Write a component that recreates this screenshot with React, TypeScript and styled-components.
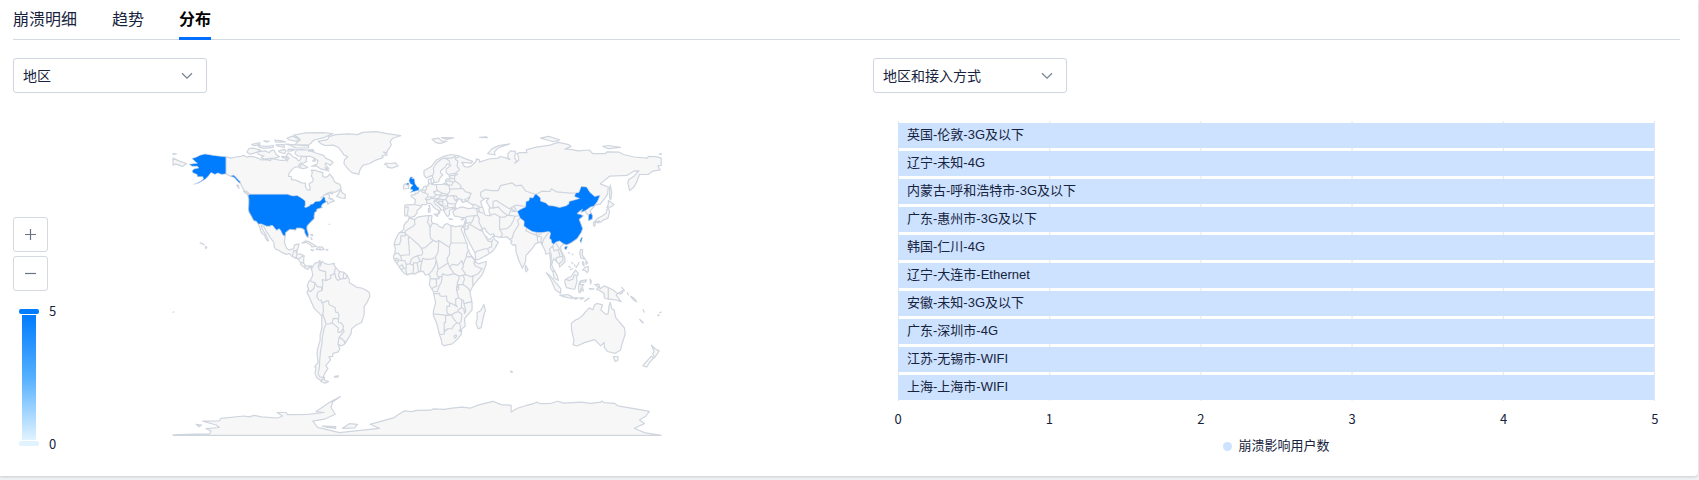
import React from "react";
import styled, { createGlobalStyle } from "styled-components";

const GlobalStyle = createGlobalStyle`
  *, *::before, *::after { box-sizing: border-box; }
  body {
    margin: 0;
    background: #f0f2f5;
    color: #17233d;
    font-family: "Liberation Sans", "Noto Sans CJK SC", sans-serif;
    font-size: 13px;
  }
  ul, ol { list-style: none; margin: 0; padding: 0; }
`;

const Page = styled.main`
  padding: 0 1px 4px 0;
`;

const Card = styled.section`
  background: #fff;
  border-radius: 0 0 4px 0;
  box-shadow: 0 1px 3px rgba(0, 0, 0, 0.16);
  padding: 0 18px 20px 13px;
`;

const Tabs = styled.div`
  display: flex;
  gap: 35px;
  height: 40px;
  border-bottom: 1px solid #d5d9e0;
`;

const Tab = styled.button<{ $active?: boolean }>`
  height: 40px;
  padding: 0 0 1px;
  border: 0;
  border-bottom: 3px solid ${(p) => (p.$active ? "#006eff" : "transparent")};
  background: none;
  color: ${(p) => (p.$active ? "#000" : "#17233d")};
  font: ${(p) => (p.$active ? 700 : 400)} 16px/32px "Noto Sans CJK SC", sans-serif;
  cursor: pointer;
`;

const Columns = styled.div`
  display: grid;
  grid-template-columns: minmax(0, 1fr) minmax(0, 1fr);
  gap: 53px;
  padding-top: 18px;
`;

const Picker = styled.div`
  position: relative;
  width: 194px;
`;

const Select = styled.select`
  display: block;
  width: 100%;
  height: 35px;
  padding: 0 32px 2px 9px;
  appearance: none;
  border: 1px solid #cfd5de;
  border-radius: 3px;
  background: #fff;
  color: #17233d;
  font: 14px/20px "Noto Sans CJK SC", sans-serif;
`;

const Chevron = styled.svg`
  position: absolute;
  top: 14px;
  right: 14px;
  pointer-events: none;
`;

const MapPanel = styled.div`
  display: grid;
  grid-template-columns: 1fr minmax(0, 488px) 1fr;
  padding-top: 38px;
`;

const WorldMap = styled.svg`
  display: block;
  width: 100%;
  overflow: visible;
`;

const Controls = styled.div`
  display: flex;
  flex-direction: column;
  gap: 4px;
  padding-top: 86px;
`;

const ZoomButton = styled.button`
  display: grid;
  place-items: center;
  width: 35px;
  height: 35px;
  padding: 0;
  border: 1px solid #d5d9e0;
  border-radius: 3px;
  background: #fff;
  cursor: pointer;
`;

const Range = styled.div`
  display: flex;
  gap: 10px;
  margin: 14px 0 0 6px;
`;

const RangeTrack = styled.div`
  display: flex;
  flex-direction: column;
  align-items: center;
  gap: 1px;
  width: 20px;
`;

const Handle = styled.span<{ $color: string }>`
  width: 20px;
  height: 5px;
  border-radius: 2px;
  background: ${(p) => p.$color};
`;

const Gradient = styled.span`
  width: 14px;
  height: 125px;
  background: linear-gradient(#007cff, #55b0ff 50%, #e0f3ff);
`;

const RangeLabels = styled.div`
  display: flex;
  flex-direction: column;
  justify-content: space-between;
  margin: -7px 0;
  font: 13px/18px "Noto Sans CJK SC", sans-serif;
`;

const BarPanel = styled.div`
  padding: 28px 25px 0 25px;
`;

const Plot = styled.ul`
  display: grid;
  gap: 3px;
  padding: 2px 0 1px;
  border-right: 1px solid #e0e6f1;
  background: linear-gradient(to right, #e0e6f1 1px, transparent 1px) 0 0 / 20% 100%;
`;

const Bar = styled.li`
  height: 25px;
  padding-left: 9px;
  background: #cce2ff;
  line-height: 24px;
  white-space: nowrap;
`;

const Axis = styled.ol`
  display: flex;
  justify-content: space-between;
  margin: 9px -6px 0;
  font: 13px/18px "Noto Sans CJK SC", sans-serif;
`;

const Tick = styled.li`
  width: 12px;
  text-align: center;
`;

const Legend = styled.div`
  display: flex;
  align-items: center;
  justify-content: center;
  gap: 6px;
  margin-top: 8px;
  line-height: 20px;
`;

const Dot = styled.span`
  width: 9px;
  height: 9px;
  border-radius: 50%;
  background: #cce2ff;
`;

/* Every shape is a list of "longitude,latitude" points. */
const project = (points: string) =>
  points
    .trim()
    .split(/\s+/)
    .map((pair) => {
      const [lon, lat] = pair.split(",").map(Number);
      return `${((lon + 180) * 1.356).toFixed(1)} ${((84 - lat) * 1.807).toFixed(1)}`;
    })
    .join("L");

const usEast =
  "-67,44.8 -70,43.5 -70.7,42 -70,41.7 -72,41.2 -74,40.7 -74,39.7 -75.5,39 -76,37 -76,35.5 -78,34 -79.5,33 -81.2,31.5 -81.3,29.7 -80.2,27 -80.4,25.2 -81.5,25.8 -82.8,27.8 -83,29.2 -84.3,30 -86,30.3 -89,30.3 -89.5,29.2 -91.5,29.5 -94,29.6 -97,27.8 -97.3,25.8";
const usWest =
  "-117,32.5 -118.5,34 -120.5,34.5 -122,36.8 -123.8,39 -124.3,40.5 -124,44 -124,46.3 -124.7,48.3";

const land = [
  // North and Central America
  `-141,69.7 -137,69 -134,69.6 -130,70 -128,70.5 -125,69.5 -124,70 -121,69.8 -117,68.9 -115,68 -110,68 -108,67.5 -108,68.7 -105,68.5 -101,67.8 -98,67.8 -96,68.2 -96,67.3 -94.5,69 -96.5,70.2 -95,71.9 -93,71 -91.5,69.6 -89,69 -87.5,67.5 -86,68 -85.5,69.8 -82,69.8 -81.3,68.7 -82,67.8 -81.5,67 -83.5,66.4 -86,66.2 -87,65.3 -88,64.2 -90,64 -92.5,62.5 -94.5,60.5 -94.7,58.9 -93,58.8 -92.4,57 -90,57 -87,56 -85,55.3 -82.3,55.1 -82.3,53 -81,51.5 -79,51.3 -79,53 -79.8,54.7 -77,56 -76.5,57.5 -78,59 -77.3,61 -78,62.3 -75,62.2 -72,61.5 -69.5,61 -69.5,59 -68,58.3 -66,58.7 -64.5,60.2 -62,58 -61,56 -59,55 -57,54.5 -56,52.7 -57,51.5 -60,50.2 -64,50.2 -67,49.3 -69,48.2 -71,47 -68,48.8 -65,49.2 -64.5,48 -65,46.7 -62,45.8 -61,45.3 -64,44.5 -66,43.5 -66,45 ${usEast} -97.8,22.5 -97,20.5 -96,19 -94.5,18.2 -92,18.6 -91,19 -90.4,21 -87,21.5 -87.7,19.5 -88.3,18 -88.8,16 -86,15.9 -83.3,15 -83.6,13 -83.7,11 -82.2,9.2 -80,9.2 -78,9.4 -77.3,8.6 -78,7.5 -78.5,8.8 -80,8.3 -80.5,7.4 -82.8,8.2 -83.6,8.8 -85.7,10 -86,11.2 -87.5,13 -90,13.7 -92.2,14.6 -94,16.1 -96.5,15.7 -99.7,16.8 -102,18 -104,18.5 -105.5,20 -105.4,21.5 -106,22.8 -108.5,25.2 -109.4,26.6 -111,28 -113,31 -114.8,31.8 -114.6,30.5 -112.8,28 -111,26 -109.5,23.2 -110.2,23.2 -112,25 -112.2,26.2 -114.2,27.2 -115,28 -115.8,30.2 ${usWest} -123,48.8 -125,50.2 -127.5,51 -129,53 -130.2,55 -132,56.5 -134,58.5 -137.5,59 -139.8,59.8 -141,60.3`,
  // Canadian islands
  "-117,71 -113,70.3 -115,69.3 -113,68.5 -105,69 -101.5,69.7 -104,71 -105.5,73.5 -108,73 -109,72 -112,73 -118,72.5",
  "-123,71.2 -125.5,72.2 -124,74.3 -121,74.5 -115.5,73.4 -119,72",
  "-90,71.5 -89,73.6 -85,73.7 -81,73.5 -78,72.8 -74,71.7 -69,70.5 -67.5,69 -64,67.8 -61.8,66.6 -64,65 -67,66.3 -68,65.6 -65,63.2 -68,63.7 -65,62 -71,63 -74,64.5 -78,64.5 -74,65.5 -73,67.5 -76,69 -79,70 -84,70 -88,70.3",
  "-85,65.8 -82,64.5 -80.5,63.8 -84,63.2 -87,63.7",
  "-90,76.5 -80,76.2 -78,77.5 -76,79 -68,80.5 -64,82 -62,82.6 -70,83.1 -82,83 -91,81.8 -88,80.5 -86,79 -88,78",
  "-97,76.7 -89,76.3 -80,75.7 -80,74.7 -89,74.6 -92,75.5 -94,76.3",
  "-95,74 -90,73.8 -93,72.8 -95.5,73",
  "-102,73 -97.5,73.8 -96.7,72.8 -98,71.4 -102,72.5",
  "-117,76 -111,75.5 -106,76 -106,75 -113,74.4 -117,75.3",
  "-104,76.3 -98,76.5 -98,75 -102,75.4",
  "-122,76.6 -116,77.5 -116,76.6 -120,75.9",
  "-113,78.5 -109,78.3 -111,77.8",
  "-105,79 -100,78.6 -97,78 -104,77.8",
  "-96,80 -92,81.2 -87,79.5 -89,78.3 -94,79",
  "-100,70 -96,69.6 -96,68.8 -99,69.2",
  "-77,73.7 -76,72.9 -80,72.9 -80,73.6",
  "-76,68.3 -75,67.4 -77,67.3",
  "-59.3,47.8 -56,51.5 -55.5,50 -53,48.8 -53,46.7 -56,46.9",
  "-64,49.8 -62,49.2 -63.5,49.3",
  "-64,46.8 -62.2,46.3 -63,46.1",
  "-128,50.7 -125,50 -123.5,48.4 -126,49.2",
  "-133,54 -131.8,54 -131.3,52.2",
  // Greenland and Iceland
  "-73,78.3 -66,79.2 -65,80.8 -60,82 -50,82.4 -44,82 -40,83.2 -30,83.6 -22,82.5 -12,81.4 -18,80 -20,78 -19,76.5 -20,75 -22,73 -22,72 -25,72.3 -22,70.7 -26,70.3 -25,69.3 -30,68 -35,66 -40,65 -42,62.8 -43,60 -48,61 -51,63 -54,66 -53.5,68 -51,69.8 -54,70.8 -55,72 -58,75 -62,76.2 -68,76 -71,77",
  "-24,65.5 -22,65.2 -22,64 -18.7,63.4 -14,64.7 -16,66.4 -20,66 -23,66.3",
  // Caribbean and Pacific islands
  "-85,21.9 -82.5,23.1 -80,22.9 -77,21.5 -74.3,20.2 -77.7,19.9 -78.5,21 -82,22.4",
  "-74.4,18.5 -73,19.9 -70,19.8 -68.5,18.5 -71,18.2",
  "-78.2,18.4 -76.3,18.1 -77.5,17.8",
  "-67,18.5 -65.7,18.4 -66.5,18",
  "-78.5,26.7 -77,26.6 -77.2,25.9",
  "-78.2,25 -77.5,24 -78,24.2",
  "-156,20.2 -155,19.5 -155.8,19",
  "-160,22.1 -158,21.5 -157,21",
  "-61.8,10.7 -61,10.8 -61.3,10.1",
  "-64.9,32.4 -64.5,32.3",
  // South America
  "-77.3,8.6 -75.5,10.7 -74.8,11 -73,11.3 -71.7,12.4 -71.3,11 -71.7,9.2 -71,9.8 -70,12 -68,10.6 -65,10.1 -62,10.7 -61,9.5 -60,8.5 -57.5,6.3 -54,5.8 -51.7,4.2 -50,1.7 -50,0 -48,-0.8 -44.5,-2.5 -41,-2.9 -38.5,-3.7 -35.3,-5.2 -34.8,-7.5 -37,-11 -39,-13 -39,-17.5 -40,-20 -41,-22 -44.5,-23.2 -48.3,-25.5 -48.7,-28.3 -50.5,-30.5 -53.5,-34 -56,-34.9 -58.3,-34 -57,-36.5 -58,-38.2 -62,-39 -62.3,-40.7 -65,-41 -63.8,-42.5 -65.3,-44 -67.3,-45.7 -65.8,-47.5 -68,-50 -69,-52 -68.3,-52.5 -71,-54 -74,-52.5 -75.3,-50 -74.5,-47 -75.5,-46.5 -73,-44 -73.7,-40 -73.5,-37 -71.5,-32 -71.5,-29 -70.3,-25 -70.3,-18.3 -76,-14 -79.5,-8 -81.2,-5.5 -80,-3.2 -81,-2 -80,0.5 -78.8,1.5 -77,3.9 -77.4,6.5 -77.9,7.2",
  "-68.6,-52.7 -68,-54 -65.2,-54.6 -68,-55.5 -71,-54.5",
  "-61,-51.8 -58,-51.5 -58.5,-52.2 -61,-52.2",
  // Africa
  "-6,35.8 -2,35.1 1,36.5 6,37 10,37.3 11,37 10.5,34.5 11,33.2 15,32.3 16,31.3 19,30.3 20,32 22,32.8 25,31.6 29,31 31,31.5 34.2,31.3 32.5,30 32.6,29.6 34,27 35.5,24 37,21 37.3,19 39,16 40,15 43,12.5 43.3,11.5 45,10.5 51,11.8 51,10.4 48,4.5 44,1 41,-2 39,-5 39.5,-7 40.5,-10.5 40.6,-15 36.5,-18.5 35,-20 35.5,-24 33,-25.5 32.5,-28.5 30,-31 26,-33.8 20,-34.8 18.3,-34 18,-32 16.5,-28.6 14.5,-22.5 12,-18 12,-15.5 13.7,-11 13,-8.8 12,-5 9,-1 9.5,1 9.5,3.9 8.5,4.6 6,4.3 4.5,6.3 1,6 -2,4.8 -4,5.2 -7.5,4.4 -9,5 -11.5,6.9 -13.2,8.8 -15,10.9 -16.8,12.5 -17.5,14.7 -16.5,16 -16,19 -17,21 -16,23.7 -14.5,26.2 -13,27.8 -11.5,28.3 -9.8,29.7 -9.8,31.5 -8.5,33.3 -6.8,34.2",
  "49.3,-12 50.4,-15.6 49.5,-17 47.2,-24.8 45,-25.5 43.4,-22.5 44.4,-20 44.2,-16.6 47,-15.3",
  // Eurasia
  "-9,43 -1.8,43.4 -1.2,46 -4.5,48 -4,48.7 -1.5,48.7 -1.5,49.6 0,49.4 1.8,51 4,51.8 5,53.2 8,53.7 8.5,55.3 8.3,57 10.5,57.7 10.3,56.2 10.8,54.4 13,54.3 16,54.4 18.7,54.5 21,55.3 21.2,57 22.5,57.6 24,57.2 24.3,58.3 23.5,59.2 28,59.6 30,60 27,60.5 23,59.9 21.4,61 21.4,63 25,65 22,65.8 21,64.3 17.5,62 17.2,60.7 19,59.8 16.5,57.5 16,56.2 14,55.5 12.8,55.5 11.2,59 10.5,59.3 7,58 5.2,59.5 5,62 10.5,64.3 14,67.8 19,69.8 25,71 31,70.3 33,69.4 41,67.2 40,66.2 33,66.7 35,64.3 38,64 40,64.7 42.5,66.4 44,68 43.5,68.6 46,68 46,66.8 53,68.5 60,69 61,69.9 65,69.3 68.5,68.2 67,69.5 67,71.5 69,73 72.5,72.7 72,69 73.5,67.5 72,66.2 75,67.8 74.5,70.5 73.5,71.5 76,72 81,72 80.5,73.6 87,75 98,76.2 104,77.7 112,76.5 113.5,75.5 109,74 113,73.8 119,73 127,73.5 129.5,71.5 133,71.5 139,71.5 140,72.5 149,72.3 152,71 160,69.6 170,69 170.5,70 176,69.8 180,69 180,65 177.5,64.7 179.3,62.5 174,61.8 170.3,59.9 164,59.9 163,58 162,56 160,53 156.7,51 155.5,55 156,57 160,59 163.5,62 160,61.8 155,59.5 142,59 135,54.7 141,53 140.5,49 138,46.3 135,43.5 132,43.2 130.7,42.3 127.5,39.8 129.4,37 129,35.2 126.4,34.5 126.5,37.5 125,38.5 124,39.9 121,39 122,40.7 119,39.2 118,38.2 120.5,37.8 122.5,37 119.5,35.2 121,32 122,30 121,28 118,24.5 113.5,22.2 110.5,21 108,21.6 106,20 106,18.3 109,14 109,11.5 105,8.7 104.8,10.3 102.5,12 100.8,13.4 100,12 99.2,10 100.3,8 103.3,4 104.2,1.3 101,2.7 100.2,6 98.3,8.2 98.5,12 97.7,16.5 95,15.8 94.3,18 92,21.5 90.5,22.5 87,21.5 86,20 82,16.5 80.2,15 80,12 79,10 77.6,8 75,12.5 73,17 72.7,21 70.5,20.8 69,22.3 70,23 67,24.8 66.5,25.4 61.5,25.1 57.3,25.7 56.5,27.1 54,26.5 51,28.5 50,30.2 48,30 48.8,27.5 50.2,26 50.8,25 51.5,25.5 51.5,24.2 54,24.1 56.3,26 57,24 59.8,22.5 57.7,19.5 55,17 52,15.6 45,12.8 43.3,12.8 42.7,16.5 39,21.5 35,28 34.9,29.5 34.2,31.3 35,33 36,36 32,36.2 30.5,36.7 27.5,36.9 26.3,39.3 29,41 33,42 38,41 41.5,41.5 41,43 37,45 39,47.3 35,46 36.5,45.2 33.5,44.5 32.5,45.5 33.5,46 31,46.6 29.5,45.2 28.5,43.7 27.8,42 29,41.2 26,40.7 23.8,40 24,38 22.8,36.5 21.5,37.5 19.5,40 19.5,41.8 16,43.5 14,45 13.5,45.7 12.3,45 13.5,43.5 16,42 18.4,40.2 17,40.5 16.6,38.5 15.8,38 15.8,40 12.3,41.7 10.3,43.9 8,44 6.5,43.2 3.5,43.3 3.2,42 0,40 0,38.7 -2,36.8 -5.5,36 -6.5,37 -9,37 -9.3,39",
  "-180,69 -175,67.2 -170,66 -173,64.4 -178,65.8 -180,65",
  // European islands
  "-10,52 -6.3,52.2 -6,54 -8,54.3 -8.3,55 -10,54",
  "11,54.8 12.5,56 12,55",
  "8.3,41 9.6,41 9.5,39.2 8.5,39",
  "8.7,42.6 9.4,43 9.4,41.5",
  "12.5,38 15.5,38.2 15,36.7",
  "23.6,35.5 26.2,35.1 24,35",
  "32.4,35 34.5,35.6 33.5,34.7",
  // Arctic islands
  "11,79.5 16,80 18,78.5 22,78.3 17,77 14,77.5",
  "18,80.3 27,80.2 22,79.4",
  "52,71.5 55,74 60,76 68.5,76.9 60,74.8 57,72.5 57.5,70.7",
  "46,80.5 51,80.8 52,80.3",
  "91,80 97,81 105,79.2 104,78.6 100,78.2 96,79",
  "137,75.5 141,76 146,75.4 150,75 141,74.2",
  "-180,71.5 -177.5,71.3 -180,71",
  "178.7,71.2 180,71.5 180,71",
  // East Asian islands
  "142.5,54 143.5,50 142.8,46 142,47 142,52",
  "141,45.5 145.3,43.3 143,42 140,41.7 141,43.5",
  "141,41.4 142,39.5 140.8,35.8 137,34.6 135.5,33.6 131,34 133,35.5 136.5,37 139.5,38.5 140,40.7",
  "130,33.5 131.8,33.5 131,31.3 130.2,31.5",
  "132.5,33.8 134.5,34.2 133.5,33",
  "80,9.7 81.8,7.3 80.5,6 79.8,7.5",
  "120.6,18.5 122.2,18.4 121.7,15.5 124,13 120.7,13.8 120,16",
  "122,7 124,8.5 126.3,9 126.3,6.5 125.4,5.6 124,6.8",
  "122,11.8 123,11 123.2,9.2 122,10.5",
  "124.5,12.5 125.7,11 124.8,10.2",
  "119.5,11.2 117.3,8.4 119,10.5",
  // South China Sea
  "111.5,16.8 112.5,16.3",
  "114,11.2 115,10.6",
  "112,9 113,8.4",
  "116,10 116.6,9.2",
  "114.3,15.8 115,15.6",
  "113,7.2 114.5,7.8",
  // Indonesia and Oceania
  "95.3,5.6 98,4 103.5,-1 106,-3.2 105.8,-5.8 102,-4 98.7,1.8",
  "105.2,-6.8 108.5,-6.8 111,-6.5 114.5,-7.8 114.3,-8.7 108,-7.7",
  "109,1.5 111.5,2.8 113.5,3.5 116.8,7 119,5.2 117.5,3 118,1 116.3,-3.5 114,-3.4 110.2,-2.7 109,0",
  "119.8,0.5 121,1.2 125,1.6 124,.4 120.3,.4 120.3,-1 123,-1 121.7,-2 122.7,-4.5 121.5,-4.3 120.9,-2.8 120.3,-5.5 119.5,-5.4 119,-3",
  "131,-1 134,-.8 135,-3.3 138,-1.7 144.5,-3.9 147.7,-6 147,-7 150.5,-10.5 147,-9.5 143,-9.2 141,-9.1 138,-8.3 138,-6 134,-4 132.3,-3.8 133.8,-2.5",
  "115,-8.3 119,-8.3 117,-9",
  "120,-8.3 123,-8.5 120.5,-9",
  "123.5,-10.3 127,-8.4 125,-9.3",
  "127.5,2 128.5,1 128,-.8",
  "127,-3.2 130.5,-3.4 128,-3.6",
  "148.5,-5.7 152,-4.2 151.5,-5.6 149.5,-6.3",
  "151,-2.6 153,-4.3",
  "155,-5.6 156,-6.7",
  "157.5,-7.5 160,-8.5 162,-10.5 159.5,-9.5",
  "164.2,-20.2 167,-22.2 165.5,-21.7",
  "166.7,-14.8 167.5,-16.3",
  "177.3,-18 178.5,-17.7 178,-18.2",
  "179,-16.6 180,-16.2",
  "-180,-16.3 -179.3,-16.1",
  "113.7,-22.5 114,-26.5 115.7,-32 115,-34.2 118,-35 124,-33 131,-31.5 135.5,-34.9 138,-33 138,-35.6 140.5,-38 146,-39 150,-37.3 151.3,-33.5 153.5,-28.5 153,-25 149.5,-22 146.3,-19 145.4,-15 143.6,-14.4 142.5,-10.8 141.5,-13 140.8,-17.4 139,-17.4 135.5,-15 136.8,-12.2 132.6,-11.4 131,-12.2 129.5,-14.9 127,-13.9 124,-16.2 122.2,-18 119,-20 116.8,-20.6",
  "144.7,-40.8 148.3,-41 148,-43 146,-43.5",
  "172.7,-34.5 175.5,-36.5 178.5,-37.7 177,-39.5 175,-41.5 173.8,-39.3 174.8,-38",
  "172.8,-40.6 174.2,-41.8 171,-44.5 169.5,-46.6 166.5,-46 168.5,-44",
  "69,-48.8 70.5,-49.2 69.5,-49.6",
  // Antarctica
  "-179.9,-84.2 -170,-83.9 -153,-83.6 -152,-82 -155.7,-80.7 -145.8,-80.1 -148.3,-78.7 -158.1,-76.6 -145.8,-76.4 -144.6,-75 -127.4,-73.7 -124,-74.2 -120,-73.4 -115,-74.2 -102.8,-74.8 -99,-73.7 -103.3,-71.8 -96.7,-71.8 -95.5,-73 -80.7,-72.8 -68.4,-71.8 -74.5,-71.3 -69.6,-68.7 -64.7,-66.3 -56.6,-63 -62.2,-65.9 -63.5,-69 -60.3,-72.8 -68.4,-75.5 -77,-76.6 -73.3,-80 -57.3,-82.9 -40,-81.5 -27.8,-80.5 -34.7,-78.3 -16.8,-74.6 -14,-73 -9.4,-70.9 -4,-71.3 0,-70.6 10,-70.5 12,-69.8 20,-70 26,-69.4 33,-68.8 39,-69.4 45,-67.7 50,-66.7 56,-65.6 61.9,-67.4 69.3,-67.8 69.3,-71.5 74,-69.4 80,-68 86.5,-66.7 88,-66 91,-66.9 98.8,-66.7 103.7,-65.6 108,-66.6 121,-66 128,-66.7 135.6,-66 136,-65.4 138,-66.3 145.5,-66.7 148,-68.1 160,-69.6 171.3,-71.1 168.8,-73.7 164,-75.9 167.6,-77.9 160.2,-80.5 167.6,-82.9 180,-84.4 -180,-84.4",
  "-55,-80.5 -50,-78 -44,-78.3 -46,-80.3",
  "-70,-79.3 -60,-79.6 -60,-80.5 -66,-80",
  "-163,-78.3 -159,-78.8 -161,-79.6",
];

const highlighted = [
  // United States
  `-123,49 -95.2,49 -94.6,48.7 -91.5,48.1 -88.4,48.3 -84.8,46.7 -83.6,46 -82.5,45.3 -82.4,43 -83,42 -82,41.6 -79,42.7 -79,43.4 -76.8,43.6 -75,45 -71.4,45.2 -70,46.5 -69.2,47.4 -68,47.3 -67.8,45.8 ${usEast} -99,26.5 -100.5,28.8 -101.4,29.8 -102.5,29.7 -103.2,29 -104.5,29.7 -106.5,31.7 -108.2,31.7 -108.2,31.3 -111,31.3 -114.8,32.6 ${usWest}`,
  "-141,69.7 -145,70 -150,70.5 -156.5,71.3 -160,70.6 -163,69.5 -166,68.8 -163.5,67 -162,66.2 -168,65.6 -166,64.5 -162,64.5 -161,63.6 -164.5,63 -166,61.8 -165,60.7 -162.2,59.9 -162,58.7 -158,58.7 -157.5,57.5 -160,56 -163,55 -164.8,54.5 -161,55.2 -156,57.5 -154,59 -152,61 -149,60 -147,60.8 -144,60 -141,60.3",
  "-137.5,59 -135.5,59.6 -134,58.7 -132,57 -130.2,55.8 -131,55.2 -133,56.8 -135,58.4",
  // United Kingdom
  "-5,50 1.3,51.2 1.6,52.7 .2,53 -1.5,55 -2,57.6 -4,57.7 -3,58.6 -5,58.5 -6,56.5 -5,54.8 -3,54 -4.5,53 -5,51.8 -3,51.4",
  "-8,54.2 -6,54.2 -6,55.2 -7.3,55.2",
  // China
  "74,39.5 76,40.5 80,42 80.3,45 82.5,45.5 83,47.2 85.5,47 87,49 88,49 91,47 91,45.2 95,44.2 97,42.7 101,42.5 105,41.6 110,42.6 112,43.7 112,45 116,45.8 119.8,46.7 116,47.8 117,49.7 119.3,50 121,53.3 125,53 127.5,50 131,47.8 135,48.4 133,45 131,43 130,42.4 128,42 124.3,40 121,39 122,40.7 119,39.2 118,38.2 120.5,37.8 122.5,37 119.5,35.2 121,32 122,30 121,28 118,24.5 113.5,22.2 110.5,21 108,21.6 105,23.2 102,22.4 101,21.3 99.3,22.2 98.8,24 97.6,24.5 98.5,27.5 97.3,28.3 92,27.8 88.5,27.9 85,28.3 81,30.2 78.8,31.5 79,34 76,35.8",
  "121.5,25.2 122,25 120.9,22 120.1,23.5",
  "109,20 111,20 110,18.3 108.7,19",
  // South Korea
  "126.6,37.7 128.4,38.6 129.4,37 129,35.2 126.4,34.5",
];

const borders = [
  // Central America
  "-92.2,14.6 -91.5,16 -91,17.8 -89.2,17.8 -88.3,18.4", "-89.2,17.8 -89,16", "-90,13.8 -89.3,14.4 -88.3,15.7", "-89.3,14.4 -87.8,13.4", "-87.5,13 -85,14.5 -83.2,15", "-85.7,11.1 -83.7,11", "-82.9,8.2 -82.6,9.5", "-71.7,19.7 -71.7,18",
  // South America
  "-71.3,12 -73,9.2 -72,7 -67.5,6.2 -67.3,2.5 -67,1.2 -70,1.7 -69.5,-.5 -70,-4.2 -70.8,-2.3 -73.5,-2.2 -75.3,0 -77.5,.5 -78.8,1.5",
  "-75.3,0 -76,-3 -78.5,-4.8 -80,-4.5 -80.2,-3.3",
  "-70,-4.2 -73,-5 -74,-7.5 -72.5,-9.5 -70.5,-9.7 -70.5,-11 -69.5,-11 -69,-15 -69.5,-17.5 -70.3,-18.3",
  "-69.5,-11 -66.5,-10 -65.3,-10 -65,-12 -60.5,-13.7 -60,-16.2 -58.3,-16.5 -57.5,-18.2 -58,-19.8 -61.8,-19.7 -62.7,-22.2 -64.5,-22.7 -67,-22.8 -68.5,-19.5 -69.5,-17.5",
  "-67,-22.8 -68.5,-25 -69.8,-30 -70.2,-34 -71.2,-38 -71.8,-43 -72,-47 -73,-50 -72,-52 -68.5,-52.3",
  "-62.7,-22.2 -58,-25 -58.5,-27.3 -56,-27.3 -54.6,-25.5 -54.3,-24 -55.8,-22.3 -58,-22 -58,-19.8",
  "-54.6,-25.5 -53.8,-27 -57.6,-30.2 -58.3,-34", "-57.6,-30.2 -55.5,-30.9 -53.5,-32.5 -53.5,-34",
  "-60,8.5 -61,6 -60.7,5.2 -64,4 -63.5,2.5 -67,1.2", "-60.7,5.2 -59.8,2.5 -58.5,1.3 -56.5,2 -54.5,2.3 -52.5,2.3 -51.7,4.2", "-57.2,6 -58,4 -56.5,2", "-54,5.8 -54.3,4 -54.5,2.3",
  // Africa
  "-2,35.1 -1.5,32.3 -3.5,31 -8.7,28.7 -8.7,26 -12,26 -12,23.4 -13,21.3 -17,21", "-13,27.7 -8.7,27.7",
  "-8.7,27.3 -4.9,25 1.2,21 3.2,19.1 6,19.5 12,23.5 10,24.5 9.5,27 9.5,30.3 9,32.1 7.6,33.5 8.3,35 8.6,37", "9.5,30.3 10.5,31.8 11.5,33.1",
  "-4.9,25 -6.5,25 -5.5,15.5 -9.5,15.4 -12,14.8 -14,16.5 -16.5,16",
  "12,23.5 14.2,22.6 16,23.4 24,19.5 24,20 25,22 25,31.6", "25,22 37,22",
  "24,19.5 24,15.7 22.5,14 22,12.6 22.9,11 19,9 15.5,7.5", "16,23.4 15.5,17 13.5,14 11,13.3 7,13 4,13.5 3.6,11.7",
  "3.2,19.1 4.2,16.8 3.5,15.4 .2,15 -2,14.2 -4,13.3 -5.4,10.5 -2.8,9.7 -2.8,11 0,11 2.4,12 .2,15",
  "2.4,12 3.6,11.7 2.7,9 2.7,6.3", "0,11 .7,8.3 1.1,6", "-2.8,9.7 -2.6,8 -3.1,5.2",
  "-5.4,10.5 -8,10.2 -9,12.3 -11.4,12.2 -12,14.8", "-8,10.2 -8,8 -8.5,7.5 -7.5,4.4", "-11.5,6.9 -10,8.5 -8.5,7.5", "-13.2,9 -11,10 -10,8.5",
  "-11.4,12.2 -13.7,12.6 -13.7,11.7 -15,11", "-13.7,12.6 -16.7,12.4", "-16.7,13.4 -13.8,13.4",
  "14.2,12.5 13.2,9.5 11,6.6 8.5,4.7", "13.5,14 15,10 15.5,7.5 14.5,5 16,2.2 9.8,2.2", "16,2.2 16.5,3.4 18.5,3.6 18.5,5 22.5,4.1 27.3,5.1 24,8.7 22.9,11",
  "24,8.7 26,10.2 30,9.8 33,12.2 34,10 34,8.5 33,7.9 36,4.5", "34,10 36.2,14.3 37,17 38.6,18", "36.2,14.3 40,14.5 42.4,12.5 42,11 43.2,11.4",
  "42,11 43,9.3 47,8 48,8 45,5 41.8,4 39.5,3.4 36,4.5 34,4.2 31,3.7 27.3,5.1", "41.8,4 41,2.8 41,-1 41.6,-1.7", "34,4.2 35,1.9 34,0 34,-1",
  "31,3.7 31,2.2 29.8,.5 29.6,-1.4 30.5,-1 34,-1 37.7,-3 39.2,-4.7", "29.6,-1.4 29,-2.7 29.3,-4.5 30.8,-3.3 30.5,-1", "29,-2.7 30.7,-2.4",
  "29.3,-4.5 30.7,-8.3 33,-9.4 34,-9.5 34.6,-11.5 40.4,-10.4", "30.7,-8.3 28.5,-9 28.5,-12 29.8,-13.4 27,-12 24,-11 24,-13 22,-13 22,-16.2 23.4,-17.6",
  "33,-9.4 32.7,-13.7 34.5,-14.5 35,-17 35.8,-16 35.7,-14.6 34.6,-11.5", "32.7,-13.7 30.2,-15 30.4,-16 28,-16.5 25.2,-17.8",
  "30.4,-16 33,-17.3 32.5,-21.3 31.3,-22.3 29.4,-22.2 27.5,-20.5 25.2,-17.8 21,-18.2 21,-22 20,-22 20,-28.4 16.5,-28.6", "11.8,-17.3 14,-17.4 21,-17.9 25.2,-17.6",
  "20,-25 20.7,-26.8 22.8,-25.3 25.6,-25.6 27,-23.7 29.4,-22.2", "31.3,-22.3 32,-24.5 32,-26.8 32.8,-26.8", "32,-25.8 30.9,-26.5 32,-27.2",
  "27,-29.6 28.7,-28.8 29.3,-29.5 28,-30.6 27,-29.6", "12.3,-6 16.5,-5.9 17,-7.3 19,-7.5 21.8,-7.3 22,-10 24,-11",
  "12.5,-4.8 15,-4.8 16.2,-2 17.8,0 18.5,3.6", "11,-3.9 12,-2.5 14.3,-2 14.3,1.2 13.2,2.2",
  // Europe
  "28.5,68 30,67.5 29.5,64.5 31.3,62.5 28,60.5", "11.2,59 12.3,61 12,63.5 14.5,66.3 18,68.5 20.5,69 23.7,67.5 24.2,65.8", "20.5,69 25.7,69 28,70 28.5,68", "28.5,69 31,69.7",
  "28,59.5 27.5,57.5 28.2,56.2 31,54.8 32.7,53.4 31.5,52.1 24,51.8 23.5,54 19.5,54.4", "24.3,57.9 27.4,57.5", "21,56.2 24.5,56.3 26.6,55.7 28.2,56.2", "26.6,55.7 25.8,54.2 23.5,54 21,55.3",
  "24,51.8 24,50.5 22.7,49.1 18.8,49.5 15,51 14.5,52.5 14.2,54", "15,51 12.2,50.3 13.8,48.8 17,48.7 18.8,49.5", "17,48.7 17,48 22,48.4 22.7,49.1",
  "7,53.5 6.9,52 6,51 6.2,49.5 8.2,49 7.6,47.6", "2.5,51 4.2,50 6,49.5", "3.4,51.4 6,51", "7.6,47.6 9.5,47.5 10.4,46.8 9,46 7,46 6,46.3 7.6,47.6", "7,46 7,44.8 7.6,43.8",
  "9.5,47.5 13,47.6 13.8,48.8", "10.4,46.8 13.5,46.5 16,46.8 17,48", "13.7,45.6 16,46.4 18.8,46 21,46.2 22.8,48", "16,46.8 16,46.4",
  "18.5,42.5 15.8,44.5 15.8,45.2 19,45 19,43 18.5,42.5", "19,45.9 19,45", "21,46.2 22.5,44.5 22.5,42.5 19.5,42.5", "22.5,44.2 25,43.7 28.5,43.7",
  "22,48.4 22.8,48 26.5,48.2 28.2,45.5 29.5,45.3", "26.5,48.2 29,48 30,46.5 28.2,45.5", "22.5,42.3 23,41.4 26.3,41.7 28,42", "20,39.7 21,40.9 23,41.4", "20.5,42 20.5,41", "26.3,41.7 26.1,40.8",
  "31.5,52.1 34,52.2 35.5,50.4 40,49.5 38.3,47.2", "-1.8,43.3 3.2,42.4", "-8.8,41.9 -6.5,41.8 -7,38.5 -7.4,37.2", "8.6,54.9 10,54.8",
  // Middle East
  "41.5,41.5 43.5,41 44.5,39.7 44.5,37.2 42.3,37.2 36.5,36.7 36,36", "40,43.4 43,43.2 46.5,41.8 48.5,41.8", "43.5,41.1 46.5,41.5", "45,41.2 46.5,39 44.5,39.7", "46.5,39 48.8,38.4",
  "42.3,37.2 41,34.4 39,32.3 42,31 46.5,29 48,30", "46.5,29 48.4,28.5", "44.5,37.2 46,35.5 45.5,33.7 48,30", "39,32.3 37,31.5 38,30.5 36,29.3 35,29.4 35.6,32.7 39,33.4",
  "35.1,33 35.9,33.3 36.4,34.6 35.9,34.6", "42.7,16.5 44,17.4 49,18.6 52,19 53,16.7", "52,19 55,20 55,22.7 56,24", "51.5,24 52.5,23 55,22.7",
  // Asia
  "49,46.4 47,48 46.7,50 50,51.5 55,51 60,51 61.5,53.8 70,55.3 73,53.6 77,54 80,50.8 87,49", "88,49 92,50.7 98,50.5 99,52 103,50.3 107,50 113,49.6 117,49.7",
  "52.8,41.5 56,41.3 56,45 58.5,45.6 61,44.3 66,42 68,41 71,42.3 73.5,43 80,42.2", "71,42.3 73,40.7 70,39.5 74,39.5", "56,41.3 60,42 62,40 66.5,37.4", "68,41 70.5,40.9 69,40 68,38.3 67.8,37.2",
  "54,37.3 57,38.2 61,36.5 64.5,36.3 66.5,37.4 71.5,37 72,36.7 75,37.2", "61,36.5 60.8,31.5 61,29.5 66.3,30 69.3,32 71,34.5 72,36.7", "61,29.5 63,27 61.6,25.2",
  "76,35.7 74,34.5 75,32.3 71.5,28 70,24.5 68,24", "81,30.2 80.2,28.8 84,27.4 88,26.4 88,27.9", "89,27 92,26.9", "89,22 88.5,26.3 92,25 91.3,23.5 92.3,21",
  "92.3,21.5 93.3,24 97,27.8", "100,20.4 97.5,18.5 99,15.5 98.7,10.2", "101,21.3 100,20.4 101,17.7 104,18.3 105.5,14.5 102.5,13.8 102.8,12",
  "102,22.4 104,20 106,17.5 107.5,14.5 105.5,14.5", "107.5,14.5 107.5,12.3 104.6,10.4", "100.2,6.6 102,6.2", "109.6,2 112,1.2 114.8,2 115.8,4.3 117.8,4.2", "141,-2.6 141,-9.1",
];

const caspian = "47,45 50,46.7 53,46.8 51,45 53.5,42 53,40 54,37 50,37.5 49,40.5 47.5,43";

const closed = (shapes: string[]) => shapes.map((s) => `M${project(s)}Z`).join("");
const open = (shapes: string[]) => shapes.map((s) => `M${project(s)}`).join("");

const rows = [
  "英国-伦敦-3G及以下",
  "辽宁-未知-4G",
  "内蒙古-呼和浩特市-3G及以下",
  "广东-惠州市-3G及以下",
  "韩国-仁川-4G",
  "辽宁-大连市-Ethernet",
  "安徽-未知-3G及以下",
  "广东-深圳市-4G",
  "江苏-无锡市-WIFI",
  "上海-上海市-WIFI",
];

function Dropdown({ label, value }: { label: string; value: string }) {
  return (
    <Picker>
      <Select aria-label={label} defaultValue={value}>
        <option>{value}</option>
      </Select>
      <Chevron width="12" height="8" viewBox="0 0 12 8" fill="none" stroke="#7b8494" strokeWidth="1.3">
        <path d="M1 1.2 6 6.2 11 1.2" />
      </Chevron>
    </Picker>
  );
}

export default function App() {
  return (
    <Page>
      <GlobalStyle />
      <Card>
        <Tabs role="tablist">
          <Tab role="tab">崩溃明细</Tab>
          <Tab role="tab">趋势</Tab>
          <Tab role="tab" aria-selected $active>分布</Tab>
        </Tabs>
        <Columns>
          <div>
            <Dropdown label="左侧维度" value="地区" />
            <MapPanel>
              <Controls>
                <ZoomButton aria-label="放大">
                  <svg width="11" height="11" stroke="#6b7485" strokeWidth="1.2"><path d="M0 5.5H11M5.5 0V11" /></svg>
                </ZoomButton>
                <ZoomButton aria-label="缩小">
                  <svg width="11" height="11" stroke="#6b7485" strokeWidth="1.2"><path d="M0 5.5H11" /></svg>
                </ZoomButton>
                <Range>
                  <RangeTrack>
                    <Handle $color="#007cff" />
                    <Gradient />
                    <Handle $color="#e0f3ff" />
                  </RangeTrack>
                  <RangeLabels>
                    <span>5</span>
                    <span>0</span>
                  </RangeLabels>
                </Range>
              </Controls>
              <WorldMap viewBox="0 0 488 306" role="img" aria-label="世界地图" strokeLinejoin="round">
                <path d={closed(land)} fill="#f7f7f7" stroke="#cfd5de" strokeWidth="1.2" />
                <path d={open(borders)} fill="none" stroke="#cfd5de" strokeWidth="1.2" />
                <path d={closed([caspian])} fill="#fff" stroke="#cfd5de" strokeWidth="1.2" />
                <path d={closed(highlighted)} fill="#007cff" stroke="#cfd5de" strokeWidth="0.6" />
              </WorldMap>
            </MapPanel>
          </div>
          <div>
            <Dropdown label="右侧维度" value="地区和接入方式" />
            <BarPanel>
              <Plot>
                {rows.map((row) => (
                  <Bar key={row}>{row}</Bar>
                ))}
              </Plot>
              <Axis>
                {[0, 1, 2, 3, 4, 5].map((n) => (
                  <Tick key={n}>{n}</Tick>
                ))}
              </Axis>
              <Legend>
                <Dot />
                崩溃影响用户数
              </Legend>
            </BarPanel>
          </div>
        </Columns>
      </Card>
    </Page>
  );
}
